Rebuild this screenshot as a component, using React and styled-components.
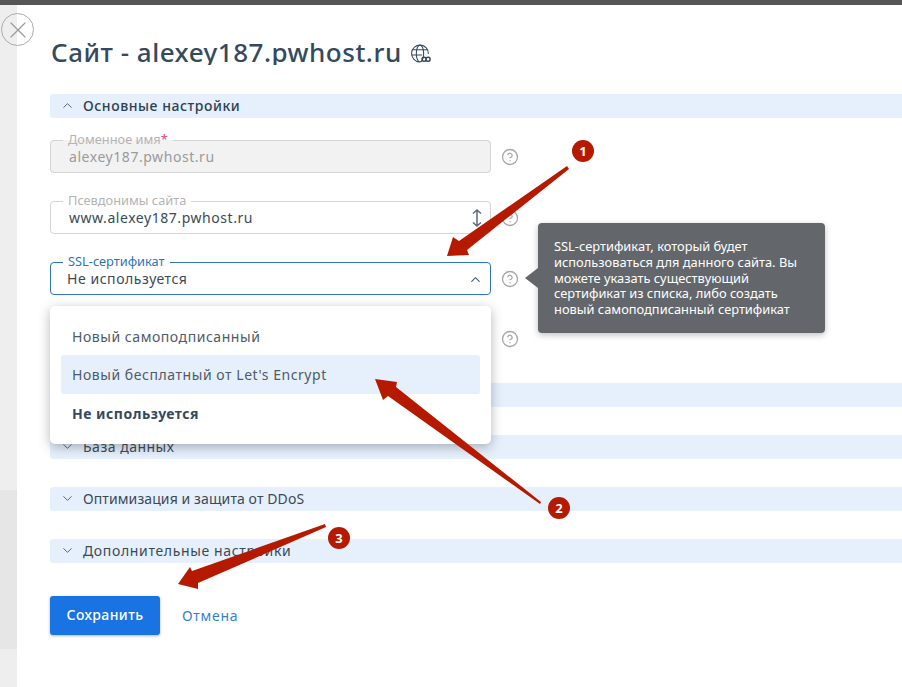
import React from 'react';
import styled, { createGlobalStyle } from 'styled-components';
import { ChevronDown, ChevronUp, CircleHelp, X } from 'lucide-react';

const Global = createGlobalStyle`
  html, body {
    margin: 0;
    padding: 0;
    background: #ffffff;
  }
  body {
    font-family: 'Noto Sans', 'Open Sans', sans-serif;
    color: #3c4956;
  }
`;

const Page = styled.div`
  position: relative;
  width: 902px;
  height: 687px;
  overflow: hidden;
  display: flex;
  flex-direction: column;
`;

const TopBar = styled.div`
  height: 5px;
  flex: none;
  background: #565656;
`;

const Body = styled.div`
  flex: 1;
  display: flex;
  min-height: 0;
`;

const Rail = styled.div`
  width: 17px;
  flex: none;
  display: flex;
  flex-direction: column;
`;

const RailPart = styled.div`
  height: ${p => (p.$h ? `${p.$h}px` : 'auto')};
  flex: ${p => (p.$h ? 'none' : 1)};
  background: ${p => p.$bg};
`;

const Main = styled.main`
  flex: 1;
  padding: 32px 0 0 33px;
  min-width: 0;
`;

const TitleRow = styled.div`
  display: flex;
  align-items: center;
  gap: 8px;
  height: 28px;
  margin-bottom: 29px;
  svg {
    flex: none;
    margin-top: 4px;
  }
`;

const Title = styled.h1`
  margin: 0;
  padding-left: 1px;
  height: 28px;
  overflow: hidden;
  font-size: 26px;
  line-height: 31px;
  font-weight: 500;
  letter-spacing: 0.5px;
  color: #35495e;
  white-space: nowrap;
`;

const SectionBar = styled.div`
  box-sizing: border-box;
  height: 24px;
  display: flex;
  align-items: center;
  gap: 8px;
  padding: 0 0 2px 10px;
  margin-bottom: ${p => p.$mb}px;
  background: #e6f0fc;
  border-radius: 3px 0 0 3px;
  font-size: 14px;
  letter-spacing: ${p => p.$ls}px;
  font-weight: ${p => (p.$strong ? 500 : 400)};
  color: ${p => (p.$strong ? '#2f3f50' : '#3c4956')};
  svg {
    flex: none;
    color: #4b5b6b;
  }
`;

const Row = styled.div`
  position: relative;
  display: flex;
  align-items: flex-end;
  gap: 10px;
  margin-bottom: ${p => p.$mb}px;
`;

const FieldBox = styled.fieldset`
  position: relative;
  box-sizing: border-box;
  width: 441px;
  height: 40px;
  margin: 0;
  padding: 0 7px 5px ${p => (p.$active ? 16 : 18)}px;
  display: flex;
  align-items: center;
  justify-content: space-between;
  min-width: 0;
  border: 1px solid ${p => (p.$active ? '#2f74b5' : '#d5d5d5')};
  border-radius: 4px;
  background: ${p => (p.$disabled ? '#f2f2f2' : '#ffffff')};
`;

const FieldLabel = styled.legend`
  margin-left: ${p => (p.$active ? -4 : -6)}px;
  padding: 0 5px;
  font-size: 12.8px;
  line-height: 14px;
  white-space: nowrap;
  transform: translateY(-1px);
  color: ${p => (p.$active ? '#2f74b5' : '#b4b4b4')};
`;

const Required = styled.span`
  color: #d9488b;
`;

const FieldValue = styled.span`
  font-size: 14px;
  line-height: 18px;
  letter-spacing: 0.55px;
  color: ${p => (p.$disabled ? '#9a9a9a' : '#3c4956')};
`;

const HelpIcon = styled(CircleHelp)`
  flex: none;
  margin-bottom: 7px;
  color: #a6a6a6;
`;

const Dropdown = styled.div`
  position: absolute;
  z-index: 2;
  top: calc(100% + 11px);
  left: 0;
  box-sizing: border-box;
  width: 441px;
  height: 138px;
  padding: 10px 11px;
  background: #ffffff;
  border-radius: 5px;
  box-shadow: 0 3px 12px rgba(40, 50, 60, 0.35);
`;

const Option = styled.div`
  box-sizing: border-box;
  height: 39px;
  display: flex;
  align-items: center;
  padding-left: 11px;
  border-radius: 3px;
  font-size: 14px;
  letter-spacing: ${p => (p.$selected ? 0.5 : 0.55)}px;
  font-weight: ${p => (p.$selected ? 700 : 400)};
  color: ${p => (p.$selected ? '#35495e' : '#4f5b67')};
  background: ${p => (p.$hover ? '#e6f0fc' : 'transparent')};
  &:first-child {
    padding-top: 2px;
  }
`;

const Tooltip = styled.div`
  position: absolute;
  z-index: 2;
  left: 488px;
  top: -32px;
  box-sizing: border-box;
  width: 287px;
  height: 110px;
  padding: 16px 16px;
  background: #63666a;
  border-radius: 4px;
  box-shadow: 0 2px 6px rgba(0, 0, 0, 0.25);
  color: #ffffff;
  font-size: 12.85px;
  line-height: 15.8px;
  white-space: nowrap;
  &:before {
    content: '';
    position: absolute;
    left: -13px;
    top: 45px;
    border-style: solid;
    border-width: 10px 13px 10px 0;
    border-color: transparent #63666a transparent transparent;
  }
`;

const Actions = styled.div`
  display: flex;
  align-items: center;
  gap: 22px;
  margin-top: 33px;
`;

const SaveButton = styled.button`
  width: 110px;
  height: 39px;
  padding: 0 0 2px;
  border: 0;
  border-radius: 3px;
  background: #1a73e3;
  box-shadow: 0 1px 3px rgba(0, 0, 0, 0.3);
  color: #ffffff;
  font: 500 14px 'Noto Sans', sans-serif;
  letter-spacing: 0.4px;
`;

const CancelLink = styled.a`
  font-size: 14px;
  letter-spacing: 0.7px;
  color: #3a7fcf;
`;

const CloseButton = styled.button`
  position: absolute;
  left: 1px;
  top: 13px;
  box-sizing: border-box;
  width: 33px;
  height: 33px;
  padding: 0;
  display: flex;
  align-items: center;
  justify-content: center;
  border: 1.5px solid #ababab;
  border-radius: 50%;
  background: transparent;
  color: #999999;
`;

const Annotations = styled.svg`
  position: absolute;
  z-index: 3;
  left: 0;
  top: 0;
  pointer-events: none;
`;

const BadgeText = styled.text`
  font-family: 'Noto Sans', sans-serif;
  font-size: 13px;
  font-weight: 700;
  fill: #ffffff;
  text-anchor: middle;
`;

const arrows = [
  '447,256 453,237 459,241 567,166 569,169 467,250 469,255',
  '375,379 397,382 396,387 541,502 540,504 388,396 383,400',
  '178,584 190,567 192,571 325,524 326,527 198,583 198,589',
];

const badges = [
  { n: 1, x: 583, y: 151 },
  { n: 2, x: 559, y: 508 },
  { n: 3, x: 339, y: 538 },
];

const GlobeIcon = () => (
  <svg width="21" height="21" viewBox="0 0 20 20" fill="none" stroke="#35495e" strokeWidth="1">
    <path d="M17.500 10.500A8 8 0 1 0 9 18" />
    <path d="M2 6.500h15M1.500 11.500h10" />
    <ellipse cx="9.500" cy="10" rx="3.500" ry="8" />
    <rect x="11.500" y="13.500" width="3.800" height="3.800" rx="1.700" strokeWidth="1.400" />
    <rect x="15.300" y="13.500" width="3.800" height="3.800" rx="1.700" strokeWidth="1.400" />
  </svg>
);

const UpDownIcon = () => (
  <svg width="12" height="20" viewBox="0 0 12 20" fill="none" stroke="#5b6b7a" strokeWidth="1.500">
    <path d="M6 2v16M2 5.500 6 2l4 3.500M2 14.500 6 18l4-3.500" />
  </svg>
);

const Section = ({ title, open, strong, mb, ls = 0.4 }) => (
  <SectionBar $strong={strong} $mb={mb} $ls={ls}>
    {open ? <ChevronUp size={15} strokeWidth={1.5} /> : <ChevronDown size={15} strokeWidth={1.5} />}
    {title}
  </SectionBar>
);

export default function App() {
  return (
    <Page>
      <Global />
      <TopBar />
      <Body>
        <Rail>
          <RailPart $h={485} $bg="#eeeeee" />
          <RailPart $h={159} $bg="#e6e6e6" />
          <RailPart $bg="#eeeeee" />
        </Rail>
        <Main>
          <TitleRow>
            <Title>Сайт - alexey187.pwhost.ru</Title>
            <GlobeIcon />
          </TitleRow>

          <Section title="Основные настройки" open strong mb={15} ls={0.55} />

          <Row $mb={21}>
            <FieldBox $disabled>
              <FieldLabel>Доменное имя<Required>*</Required></FieldLabel>
              <FieldValue $disabled>alexey187.pwhost.ru</FieldValue>
            </FieldBox>
            <HelpIcon size={18} strokeWidth={1.7} />
          </Row>

          <Row $mb={21}>
            <FieldBox>
              <FieldLabel>Псевдонимы сайта</FieldLabel>
              <FieldValue>www.alexey187.pwhost.ru</FieldValue>
              <UpDownIcon />
            </FieldBox>
            <HelpIcon size={18} strokeWidth={1.7} />
          </Row>

          <Row $mb={20}>
            <FieldBox $active>
              <FieldLabel $active>SSL-сертификат</FieldLabel>
              <FieldValue>Не используется</FieldValue>
              <ChevronUp size={15} strokeWidth={1.7} color="#4b5b6b" />
            </FieldBox>
            <HelpIcon size={18} strokeWidth={1.7} />
            <Dropdown>
              <Option>Новый самоподписанный</Option>
              <Option $hover>Новый бесплатный от Let's Encrypt</Option>
              <Option $selected>Не используется</Option>
            </Dropdown>
            <Tooltip>
              SSL-сертификат, который будет<br />
              использоваться для данного сайта. Вы<br />
              можете указать существующий<br />
              сертификат из списка, либо создать<br />
              новый самоподписанный сертификат
            </Tooltip>
          </Row>

          <Row $mb={28}>
            <FieldBox />
            <HelpIcon size={18} strokeWidth={1.7} />
          </Row>

          <Section mb={28} />
          <Section title="База данных" mb={28} ls={0.5} />
          <Section title="Оптимизация и защита от DDoS" mb={28} ls={0.1} />
          <Section title="Дополнительные настройки" mb={0} ls={0.65} />

          <Actions>
            <SaveButton>Сохранить</SaveButton>
            <CancelLink>Отмена</CancelLink>
          </Actions>
        </Main>
      </Body>

      <CloseButton>
        <X size={28} strokeWidth={1} />
      </CloseButton>

      <Annotations width="902" height="687" viewBox="0 0 902 687">
        {arrows.map(points => (
          <polygon key={points} points={points} fill="#b51a00" />
        ))}
        {badges.map(b => (
          <g key={b.n}>
            <circle cx={b.x} cy={b.y} r="11" fill="#b51a00" />
            <BadgeText x={b.x} y={b.y + 4.500}>{b.n}</BadgeText>
          </g>
        ))}
      </Annotations>
    </Page>
  );
}
